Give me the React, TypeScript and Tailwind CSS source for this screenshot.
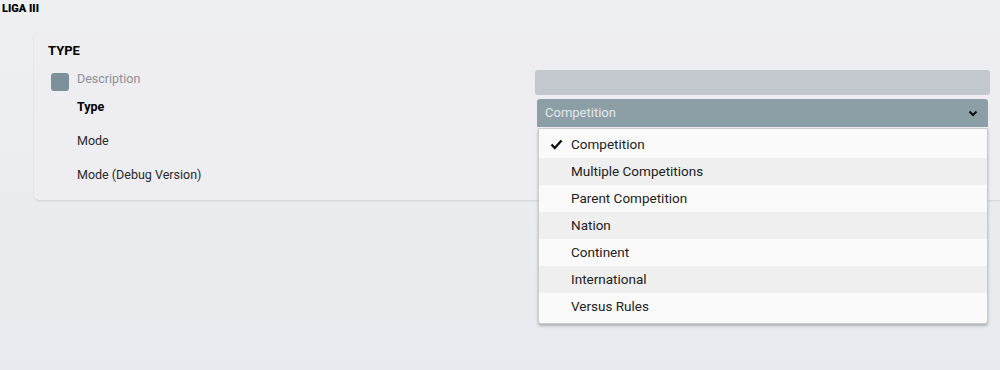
import React from 'react';

const options = [
  'Competition',
  'Multiple Competitions',
  'Parent Competition',
  'Nation',
  'Continent',
  'International',
  'Versus Rules',
];

const App: React.FC = () => {
  const selected = 'Competition';

  return (
    <div
      className="w-full h-[370px] overflow-hidden bg-gradient-to-b from-[#eef0f2] to-[#e7eaee] text-[#222]"
      style={{ fontFamily: 'Roboto, "Noto Sans", sans-serif' }}
    >
      {/* Breadcrumb */}
      <div className="pl-[2px] pt-[2px] h-[32px] text-[11px] font-black leading-[13px] text-black">LIGA III</div>

      {/* Card */}
      <div className="ml-[34px] flex bg-[#eeedf1] rounded-l-[5px] shadow-[0_1px_2px_rgba(0,0,0,0.12)] pt-[11px] pb-[17px]">
        {/* Labels */}
        <div className="w-[501px] shrink-0 pl-[14px]">
          <div className="text-[13px] font-bold leading-[16px] text-black">TYPE</div>
          <div className="mt-[12px] flex items-start">
            <div className="mt-[2px] ml-[3px] w-[18px] h-[18px] rounded-[3px] bg-[#7d919a]" />
            <span className="ml-[8px] text-[12.5px] leading-[16px] text-[#8f8f95]">Description</span>
          </div>
          <div className="mt-[8px] pl-[29px] text-[12.5px] font-bold leading-[16px] text-black">Type</div>
          <div className="mt-[18px] pl-[29px] text-[12.5px] leading-[16px] text-[#2a2a2a]">Mode</div>
          <div className="mt-[18px] pl-[29px] text-[12.5px] leading-[16px] text-[#2a2a2a]">Mode (Debug Version)</div>
        </div>

        {/* Controls */}
        <div className="w-[455px] shrink-0 pt-[27px]">
          <div className="h-[25px] rounded-[3px] bg-[#c3c8cf]" />
          <div className="relative mx-[2px] mt-[4px]">
            <div className="h-[28px] rounded-t-[3px] bg-[#8c9ea6] flex items-center justify-between pl-[8px] pr-[10px]">
              <span className="text-[13px] text-[#e4e8ea]">{selected}</span>
              <svg width="10" height="7" viewBox="0 0 10 7">
                <path d="M1.5 1.5 L5 5 L8.5 1.5" fill="none" stroke="#111" strokeWidth="2" />
              </svg>
            </div>
            {/* Dropdown menu */}
            <div className="absolute left-[1px] right-0 top-[29px] z-10 bg-[#fafafa] rounded-b-[3px] border border-[#c9cbce] shadow-[0_2px_3px_rgba(0,0,0,0.25)] pt-[2px] pb-[3px]">
              {options.map((opt, i) => (
                <div
                  key={opt}
                  className={`h-[27px] flex items-center ${i % 2 === 1 ? 'bg-[#efefef]' : 'bg-[#fafafa]'}`}
                >
                  <div className="w-[32px] flex justify-center pl-[2px]">
                    {opt === selected && (
                      <svg width="13" height="11" viewBox="0 0 13 11">
                        <path d="M1.5 5.5 L4.8 9 L11.5 1.5" fill="none" stroke="#111" strokeWidth="2.4" />
                      </svg>
                    )}
                  </div>
                  <span className="text-[13.5px] text-[#222]">{opt}</span>
                </div>
              ))}
            </div>
          </div>
        </div>
      </div>
    </div>
  );
};

export default App;
